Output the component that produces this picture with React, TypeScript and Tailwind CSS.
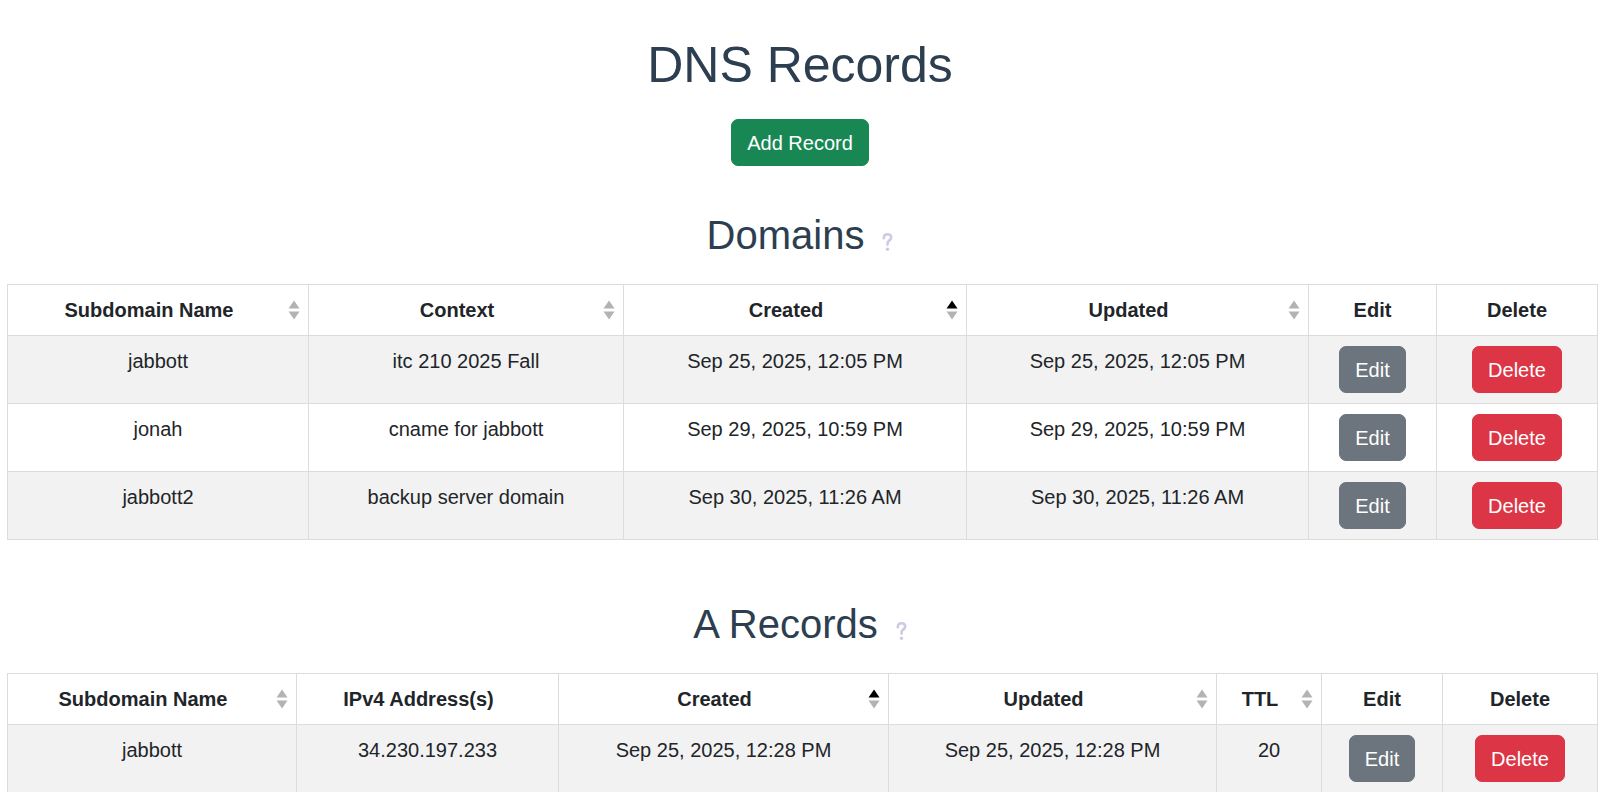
type Col = { label: string; width: number; sort?: "none" | "asc" | "off" };

const domainCols: Col[] = [
  { label: "Subdomain Name", width: 301, sort: "none" },
  { label: "Context", width: 315, sort: "none" },
  { label: "Created", width: 343, sort: "asc" },
  { label: "Updated", width: 342, sort: "none" },
  { label: "Edit", width: 128 },
  { label: "Delete", width: 161 },
];

const domainRows = [
  ["jabbott", "itc 210 2025 Fall", "Sep 25, 2025, 12:05 PM", "Sep 25, 2025, 12:05 PM"],
  ["jonah", "cname for jabbott", "Sep 29, 2025, 10:59 PM", "Sep 29, 2025, 10:59 PM"],
  ["jabbott2", "backup server domain", "Sep 30, 2025, 11:26 AM", "Sep 30, 2025, 11:26 AM"],
];

const aCols: Col[] = [
  { label: "Subdomain Name", width: 289, sort: "none" },
  { label: "IPv4 Address(s)", width: 262, sort: "off" },
  { label: "Created", width: 330, sort: "asc" },
  { label: "Updated", width: 328, sort: "none" },
  { label: "TTL", width: 105, sort: "none" },
  { label: "Edit", width: 121 },
  { label: "Delete", width: 155 },
];

const aRows = [["jabbott", "34.230.197.233", "Sep 25, 2025, 12:28 PM", "Sep 25, 2025, 12:28 PM", "20"]];

function SortIcon({ active }: { active: boolean }) {
  return (
    <svg width="12" height="20" viewBox="0 0 12 20" className="absolute right-[8px] top-1/2 -translate-y-1/2">
      <path d="M6 0.5 L11.5 8.5 L0.5 8.5 Z" fill={active ? "#000000" : "#b3b3b3"} />
      <path d="M6 19.5 L11.5 11.5 L0.5 11.5 Z" fill="#b3b3b3" />
    </svg>
  );
}

function HelpMark() {
  return (
    <svg width="11" height="19" viewBox="0 0 11 19" className="mt-[22px]">
      <path
        d="M1.8 5.2 C1.8 2.7 3.3 1.3 5.5 1.3 C7.7 1.3 9.2 2.7 9.2 4.6 C9.2 6.6 7.6 7.3 6.6 8.1 C5.8 8.8 5.5 9.5 5.5 11.6"
        fill="none"
        stroke="#cfc8e6"
        strokeWidth="2.6"
        strokeLinecap="round"
      />
      <circle cx="5.5" cy="16.2" r="1.7" fill="#cfc8e6" />
    </svg>
  );
}

function Section({ title, cols, rows }: { title: string; cols: Col[]; rows: string[][] }) {
  return (
    <>
      <div className="flex justify-center gap-[18px]">
        <h2 className="text-[40px] leading-[48px] font-normal text-[#2c3e50]">{title}</h2>
        <HelpMark />
      </div>
      <table className="mt-[25px] ml-[7px] w-[1590px] table-fixed border-collapse border border-[#dcdcdc] text-[20px] leading-[30px] text-[#212529]">
        <colgroup>
          {cols.map((c) => (
            <col key={c.label} style={{ width: c.width }} />
          ))}
        </colgroup>
        <thead>
          <tr>
            {cols.map((c) => (
              <th
                key={c.label}
                className={`relative border border-[#dcdcdc] bg-white py-[10px] pl-[10px] text-center font-bold ${
                  c.sort ? "pr-[28px]" : "pr-[10px]"
                }`}
              >
                {c.label}
                {c.sort && c.sort !== "off" && <SortIcon active={c.sort === "asc"} />}
              </th>
            ))}
          </tr>
        </thead>
        <tbody>
          {rows.map((r, i) => (
            <tr key={i} className={i % 2 === 0 ? "bg-[#f2f2f2]" : "bg-white"}>
              {r.map((v, j) => (
                <td key={j} className="border border-[#dcdcdc] p-[10px] text-center align-top">
                  {v}
                </td>
              ))}
              <td className="border border-[#dcdcdc] p-[10px] align-top">
                <div className="flex justify-center">
                  <button className="rounded-[7px] border border-[#6c757d] bg-[#6c757d] px-[15px] py-[7.5px] text-[20px] leading-[30px] text-white">
                    Edit
                  </button>
                </div>
              </td>
              <td className="border border-[#dcdcdc] p-[10px] align-top">
                <div className="flex justify-center">
                  <button className="rounded-[7px] border border-[#dc3545] bg-[#dc3545] px-[15px] py-[7.5px] text-[20px] leading-[30px] text-white">
                    Delete
                  </button>
                </div>
              </td>
            </tr>
          ))}
        </tbody>
      </table>
    </>
  );
}

export default function App() {
  return (
    <div className="min-h-screen bg-white pt-[35px] font-['Liberation_Sans',Arial,sans-serif]">
      <h1 className="text-center text-[50px] leading-[60px] font-normal text-[#2c3e50]">DNS Records</h1>
      <div className="mt-[24px] flex justify-center">
        <button className="rounded-[7px] border border-[#198754] bg-[#198754] px-[15px] py-[7.5px] text-[20px] leading-[30px] text-white">
          Add Record
        </button>
      </div>
      <div className="mt-[45px]">
        <Section title="Domains" cols={domainCols} rows={domainRows} />
      </div>
      <div className="mt-[60px]">
        <Section title="A Records" cols={aCols} rows={aRows} />
      </div>
    </div>
  );
}
